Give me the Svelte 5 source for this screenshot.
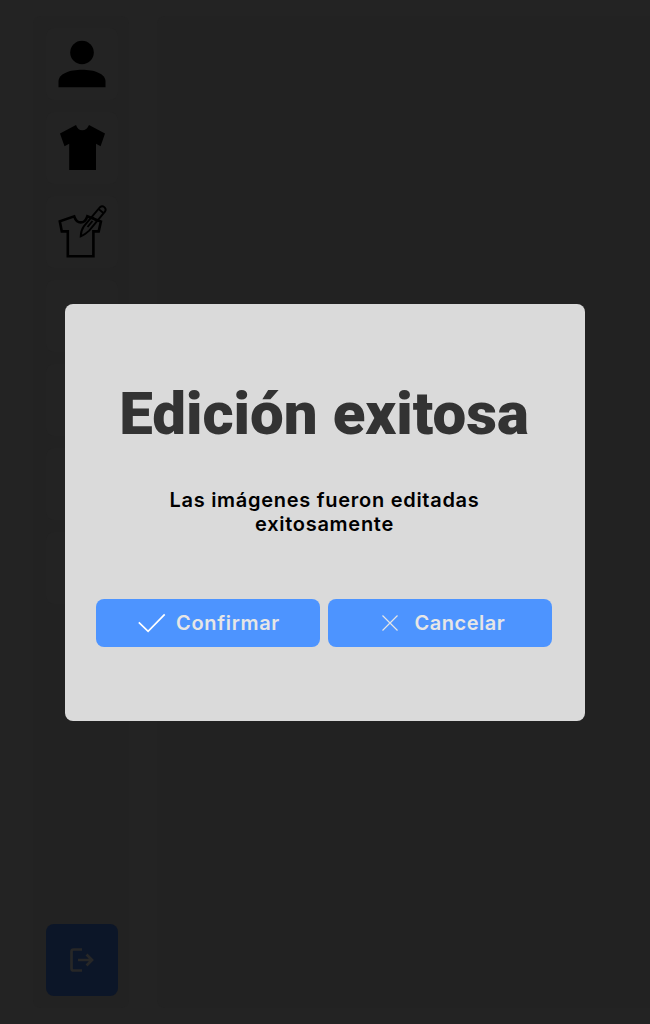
<script>
  const slots = ['user', 'shirt', 'edit', '', '', '', ''];
</script>

<div class="page">
  <aside>
    <nav>
      {#each slots as slot}
        <button class="tile" aria-label={slot || 'item'}>
          {#if slot === 'user'}
            <svg viewBox="0 0 72 72">
              <circle cx="36" cy="24.5" r="11.8" />
              <path d="M12.5 59.2V53.4C12.5 45.5 24 41.7 36 41.7S59.5 45.5 59.5 53.4V59.2Z" />
            </svg>
          {:else if slot === 'shirt'}
            <svg viewBox="0 0 72 72">
              <path d="M30 13C31.2 16.5 33.2 18.2 36.2 18.2S41.6 16.5 43 13L59 21.4 54.6 34.2 50 31.8V58H23.2V31.8L18.5 34.2 14 21.4Z" />
            </svg>
          {:else if slot === 'edit'}
            <svg viewBox="0 0 72 72" class="line">
              <path d="M28.2 20.3C29.6 24.6 31.6 26.4 34.8 26.4S39.9 24.6 41.3 20.3L54.9 25.5 52.7 35.4H47.4V60.2H21.8V35.4H15.8L13.8 25.3Z" />
              <g class="pencil">
                <path d="M54 11.2C56.8 8.6 61 12.2 59.1 15.4L43.2 34.6Q39 38.6 34.7 40.4 34.9 34.5 37.8 30.4Z" />
                <path d="M52.8 13.1 57.6 17.2M46 21 50.6 25M41.5 31 46.5 25" />
              </g>
            </svg>
          {/if}
        </button>
      {/each}
    </nav>
    <button class="tile logout" aria-label="Salir">
      <svg viewBox="0 0 72 72">
        <path d="M36 25.5H27.5Q25.5 25.5 25.5 27.5V44.5Q25.5 46.5 27.5 46.5H36M32 36H46M40.5 30.5 46 36 40.5 41.5" />
      </svg>
    </button>
  </aside>
  <main></main>
</div>

<div class="overlay">
  <div class="modal" role="dialog" aria-modal="true" aria-labelledby="title">
    <h1 id="title">Edición exitosa</h1>
    <p>Las imágenes fueron editadas<br />exitosamente</p>
    <div class="actions">
      <button>
        <svg class="check" viewBox="0 0 28 20"><path d="M.8 9.3 10.1 18.3 26.7 1.4" /></svg>
        <span class="confirm">Confirmar</span>
      </button>
      <button>
        <svg class="cross" viewBox="0 0 16 16"><path d="M.5.5 15.5 15.5M15.5.5.5 15.5" /></svg>
        <span class="cancel">Cancelar</span>
      </button>
    </div>
  </div>
</div>

<style>
  :global(body) { background: #232323; overflow: hidden; }
  button { border: 0; padding: 0; font: inherit; }
  .page {
    box-sizing: border-box;
    height: 1024px;
    padding: 16px 0 16px 33px;
    display: flex;
    gap: 28px;
  }
  aside {
    box-sizing: border-box;
    width: 96px;
    padding: 12px 11px 12px 13px;
    border-radius: 8px;
    background: #222;
    display: flex;
    flex-direction: column;
    justify-content: space-between;
  }
  nav { display: grid; gap: 12px; }
  .tile {
    display: block;
    width: 72px;
    height: 72px;
    border-radius: 8px;
    background: #232323;
  }
  .tile svg { display: block; width: 72px; height: 72px; fill: #000; }
  .tile .line { fill: none; stroke: #000; stroke-width: 2.6; }
  .pencil { stroke-width: 1.9; }
  .logout { background: #0c1628; }
  .tile.logout svg { fill: none; stroke: #272727; stroke-width: 2.7; }
  main { flex: 1; border-radius: 8px 0 0 8px; background: #222; }

  .overlay {
    position: fixed;
    inset: 0;
    display: flex;
    align-items: center;
    justify-content: center;
  }
  .modal {
    box-sizing: border-box;
    width: 520px;
    height: 417px;
    padding: 75px 31px 73px;
    border-radius: 8px;
    background: #dadada;
    text-align: center;
  }
  h1 {
    margin: 0 2px 0 0;
    font: 900 60px/70px Roboto, sans-serif;
    color: #333;
    white-space: nowrap;
  }
  p {
    margin: 39.5px 1px 0 0;
    font: 600 20px/24px Inter, sans-serif;
    letter-spacing: .72px;
    color: #000;
  }
  .actions { margin-top: 63px; display: flex; gap: 8px; }
  .actions button {
    width: 224px;
    height: 48px;
    border-radius: 8px;
    background: #4d94ff;
    color: #e6e6e6;
    font: 600 20px/24px Inter, sans-serif;
    display: flex;
    align-items: center;
  }
  .actions path { fill: none; stroke: #fff; stroke-width: 1.7; }
  .check { width: 28px; height: 20px; margin: 0 10px 0 42px; }
  .cross { width: 16px; height: 16px; margin: 0 16.5px 0 54px; }
  .actions .cross path { stroke: #e6e6e6; stroke-width: 1.2; }
  .confirm { letter-spacing: .68px; }
  .cancel { letter-spacing: .52px; }
</style>
